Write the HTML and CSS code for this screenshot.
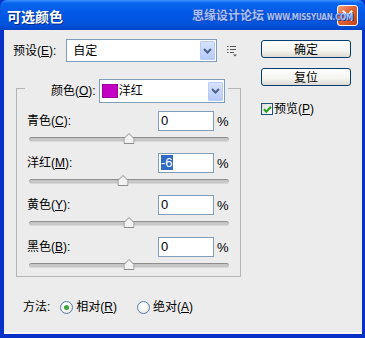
FILE: index.html
```html
<!DOCTYPE html>
<html>
<head>
<meta charset="utf-8">
<link rel="stylesheet" href="styles.css">
</head>
<body>
<div class="window">
  <div class="titlebar">
    <span class="title">可选颜色</span>
    <span class="close">
      <svg width="11" height="11" viewBox="0 0 11 11"><path d="M1.5 1.5 L9.5 9.5 M9.5 1.5 L1.5 9.5" stroke="#fff" stroke-width="2" stroke-linecap="square"/></svg>
    </span>
    <span class="watermark">思缘设计论坛 <span class="wm-url">WWW.MISSYUAN.COM</span></span>
  </div>
  <div class="client">
    <div class="leftcol">
      <div class="preset-row">
        <span class="label">预设(<u>E</u>):</span>
        <div class="combo preset-combo">
          <span class="combo-text">自定</span>
          <span class="combo-btn"><svg width="9" height="6" viewBox="0 0 9 6"><path d="M1 1 L4.5 4.5 L8 1" fill="none" stroke="#4D6185" stroke-width="2"/></svg></span>
        </div>
        <span class="menu-icon">
          <svg width="10" height="12" viewBox="0 0 10 12"><path d="M0 1.5h1.5M3 1.5h6M0 4.5h1.5M3 4.5h6M0 7.5h1.5M3 7.5h4" stroke="#555" stroke-width="1.2"/><path d="M6 9.5h4l-2 2z" fill="#555"/></svg>
        </span>
      </div>
      <fieldset class="group">
        <legend class="group-legend">
          <span class="label">颜色(<u>O</u>):</span>
          <div class="combo color-combo">
            <span class="swatch"></span>
            <span class="combo-text">洋红</span>
            <span class="combo-btn"><svg width="9" height="6" viewBox="0 0 9 6"><path d="M1 1 L4.5 4.5 L8 1" fill="none" stroke="#4D6185" stroke-width="2"/></svg></span>
          </div>
        </legend>
        <div class="channel">
          <div class="channel-row"><span class="label">青色(<u>C</u>):</span><span class="num">0</span><span class="pct">%</span></div>
          <div class="slider"><div class="track"></div><span class="thumb" style="left:50%"><svg width="11" height="11" viewBox="0 0 11 11"><path d="M0.5 10.5V5.5L5.5 0.5L10.5 5.5V10.5Z" fill="#F2F2F2" stroke="#8C8C8C"/></svg></span></div>
        </div>
        <div class="channel">
          <div class="channel-row"><span class="label">洋红(<u>M</u>):</span><span class="num"><span class="sel">-6</span></span><span class="pct">%</span></div>
          <div class="slider"><div class="track"></div><span class="thumb" style="left:47%"><svg width="11" height="11" viewBox="0 0 11 11"><path d="M0.5 10.5V5.5L5.5 0.5L10.5 5.5V10.5Z" fill="#F2F2F2" stroke="#8C8C8C"/></svg></span></div>
        </div>
        <div class="channel">
          <div class="channel-row"><span class="label">黄色(<u>Y</u>):</span><span class="num">0</span><span class="pct">%</span></div>
          <div class="slider"><div class="track"></div><span class="thumb" style="left:50%"><svg width="11" height="11" viewBox="0 0 11 11"><path d="M0.5 10.5V5.5L5.5 0.5L10.5 5.5V10.5Z" fill="#F2F2F2" stroke="#8C8C8C"/></svg></span></div>
        </div>
        <div class="channel">
          <div class="channel-row"><span class="label">黑色(<u>B</u>):</span><span class="num">0</span><span class="pct">%</span></div>
          <div class="slider"><div class="track"></div><span class="thumb" style="left:50%"><svg width="11" height="11" viewBox="0 0 11 11"><path d="M0.5 10.5V5.5L5.5 0.5L10.5 5.5V10.5Z" fill="#F2F2F2" stroke="#8C8C8C"/></svg></span></div>
        </div>
      </fieldset>
      <div class="method">
        <span class="label">方法:</span>
        <span class="radio checked"><span class="dot"></span></span>
        <span class="label">相对(<u>R</u>)</span>
        <span class="radio second"></span>
        <span class="label">绝对(<u>A</u>)</span>
      </div>
    </div>
    <div class="rightcol">
      <div class="btn">确定</div>
      <div class="btn btn2">复位</div>
      <div class="check-row">
        <span class="checkbox"><svg width="9" height="9" viewBox="0 0 9 9"><path d="M1 4.2 L3.3 6.7 L8 1.8" fill="none" stroke="#21A121" stroke-width="2"/></svg></span>
        <span class="label">预览(<u>P</u>)</span>
      </div>
    </div>
  </div>
</div>
</body>
</html>
```

FILE: styles.css
```css
* { box-sizing: border-box; }
html, body { margin: 0; padding: 0; }
body {
  width: 365px;
  height: 338px;
  overflow: hidden;
  font-family: "Liberation Sans", "Noto Sans CJK SC", sans-serif;
  font-size: 12px;
  color: #000;
}
.window {
  width: 365px;
  height: 338px;
  display: flex;
  flex-direction: column;
  background: #0831C8;
}
.titlebar {
  position: relative;
  height: 30px;
  flex: none;
  display: flex;
  align-items: center;
  justify-content: space-between;
  padding: 0 7px 0 7px;
  border-radius: 7px 7px 0 0;
  background: linear-gradient(to bottom, #3D95FF 0%, #0A66EE 10%, #0058E6 45%, #0454DE 80%, #0343C6 100%);
}
.title {
  color: #fff;
  font-weight: bold;
  font-size: 14px;
  font-family: "Noto Sans CJK SC", sans-serif;
  text-shadow: 1px 1px 0 #0A2A80;
  padding-top: 1px;
}
.close {
  width: 21px;
  height: 21px;
  margin-top: 1px;
  border: 1px solid #fff;
  border-radius: 3px;
  background: linear-gradient(135deg, #F0A080 0%, #E2673A 40%, #C8421A 100%);
  display: flex;
  align-items: center;
  justify-content: center;
}
.watermark {
  position: absolute;
  left: 192px;
  top: 7px;
  z-index: 1;
  color: #A9C2F7;
  font-family: "Noto Sans CJK SC", sans-serif;
  font-size: 12px;
  font-weight: bold;
  line-height: 16px;
  text-shadow: 0 0 1px #1740B0, 1px 1px 0 #1A47B8;
  white-space: nowrap;
}
.wm-url {
  font-family: "DejaVu Sans Condensed", "Liberation Sans Narrow", sans-serif;
  font-size: 8px;
  letter-spacing: -0.2px;
}
.client {
  flex: 1;
  margin: 0 3px 4px 4px;
  background: #ECECEC;
  display: flex;
  padding: 9px 0 0 9px;
  box-shadow: inset 0 -2px 0 #F8F8F8;
}
.leftcol {
  width: 235px;
  display: flex;
  flex-direction: column;
}
.label { white-space: nowrap; line-height: 14px; }
.label u { text-decoration: underline; text-underline-offset: 1px; }
.preset-row {
  display: flex;
  align-items: center;
  height: 23px;
}
.combo {
  display: flex;
  align-items: center;
  height: 23px;
  background: #fff;
  border: 1px solid #7F9DB9;
  padding: 1px;
}
.combo-text {
  flex: 1;
  padding-left: 5px;
  line-height: 14px;
}
.combo-btn {
  width: 15px;
  height: 19px;
  background: linear-gradient(to bottom, #D6E2FE, #B7CBF8);
  border: 1px solid #B9CCF5;
  border-radius: 1px;
  display: flex;
  align-items: center;
  justify-content: center;
}
.preset-combo {
  width: 151px;
  margin-left: 10px;
}
.menu-icon {
  display: flex;
  margin-left: 10px;
}
.group {
  margin: 11px 0 0 3px;
  width: 225px;
  border: 1px solid #B4B4B4;
  padding: 8px 11px 1px 10px;
  min-width: 0;
}
.group-legend {
  display: flex;
  align-items: center;
  padding: 6px 3px 0 26px;
  margin-left: -2px;
}
.color-combo {
  width: 126px;
  height: 24px;
  margin-left: 3px;
}
.swatch {
  width: 16px;
  height: 14px;
  margin-left: 1px;
  background: #C400C4;
  border: 1px solid #9A009A;
}
.color-combo .combo-text { padding-left: 1px; }
.channel {
  display: flex;
  flex-direction: column;
  margin-bottom: 4px;
}
.channel:last-child { margin-bottom: 0; }
.channel-row {
  display: grid;
  grid-template-columns: 1fr 56px 15px;
  align-items: center;
  height: 20px;
}
.num {
  height: 20px;
  background: #fff;
  border: 1px solid #7F9DB9;
  font-size: 13px;
  line-height: 18px;
  padding-left: 2px;
}
.sel {
  background: #316AC5;
  color: #fff;
  display: inline-block;
  line-height: 15px;
}
.pct {
  padding-left: 3px;
  font-size: 13px;
}
.slider {
  position: relative;
  height: 18px;
  margin: 0 0 0 2px;
}
.track {
  position: absolute;
  left: 0;
  right: 0;
  top: 6px;
  height: 5px;
  border-radius: 3px;
  background: #C6C6C6;
  border-top: 1px solid #8E8E8E;
  border-bottom: 1px solid #D8D8D8;
}
.thumb {
  position: absolute;
  top: 2px;
  transform: translateX(-50%);
  display: flex;
}
.method {
  display: flex;
  align-items: center;
  margin-top: 23px;
  padding-left: 10px;
  height: 14px;
}
.radio {
  width: 13px;
  height: 13px;
  border-radius: 50%;
  border: 1px solid #5A7EA8;
  background: radial-gradient(circle at 40% 40%, #fff 20%, #DCDCD7 100%);
  display: flex;
  align-items: center;
  justify-content: center;
  margin: 0 3px 0 10px;
}
.radio.second { margin-left: 20px; }
.dot {
  width: 5px;
  height: 5px;
  border-radius: 50%;
  background: #3FA23F;
}
.rightcol {
  display: flex;
  flex-direction: column;
  padding-left: 13px;
  padding-top: 1px;
}
.btn {
  width: 90px;
  height: 18px;
  border: 1px solid #003C74;
  border-radius: 3px;
  background: linear-gradient(to bottom, #FFFFFF 0%, #F4F4F0 60%, #DCDAD0 100%);
  display: flex;
  align-items: center;
  justify-content: center;
  font-family: "Noto Sans CJK SC", sans-serif;
  line-height: 14px;
}
.btn2 { margin-top: 10px; }
.check-row {
  display: flex;
  align-items: center;
  margin-top: 16px;
}
.checkbox {
  width: 12px;
  height: 12px;
  border: 1px solid #1C5180;
  background: linear-gradient(135deg, #DCDCD7, #FFFFFF);
  display: flex;
  align-items: center;
  justify-content: center;
  margin-right: 1px;
}
```
